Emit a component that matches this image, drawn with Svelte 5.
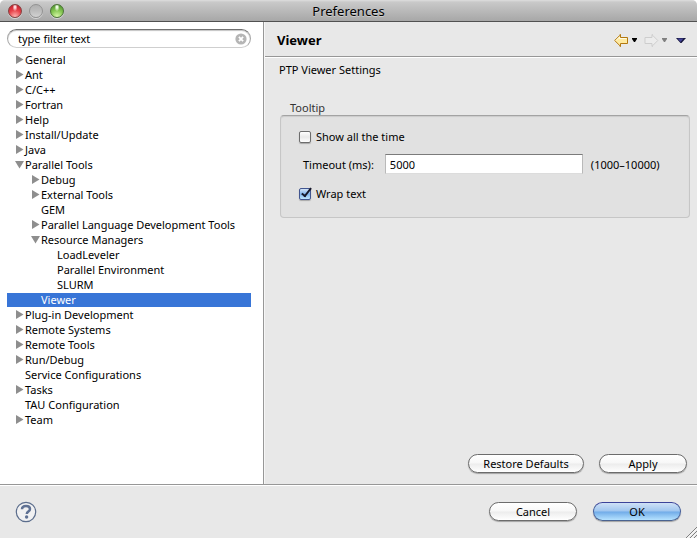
<script>
  let filter = $state('type filter text');
  let selected = $state('Viewer');
  let showAlways = $state(false);
  let wrapText = $state(true);
  let timeout = $state('5000');

  let nodes = $state([
    { name: 'General', level: 0, open: false },
    { name: 'Ant', level: 0, open: false },
    { name: 'C/C++', level: 0, open: false },
    { name: 'Fortran', level: 0, open: false },
    { name: 'Help', level: 0, open: false },
    { name: 'Install/Update', level: 0, open: false },
    { name: 'Java', level: 0, open: false },
    { name: 'Parallel Tools', level: 0, open: true },
    { name: 'Debug', level: 1, open: false },
    { name: 'External Tools', level: 1, open: false },
    { name: 'GEM', level: 1 },
    { name: 'Parallel Language Development Tools', level: 1, open: false },
    { name: 'Resource Managers', level: 1, open: true },
    { name: 'LoadLeveler', level: 2 },
    { name: 'Parallel Environment', level: 2 },
    { name: 'SLURM', level: 2 },
    { name: 'Viewer', level: 1 },
    { name: 'Plug-in Development', level: 0, open: false },
    { name: 'Remote Systems', level: 0, open: false },
    { name: 'Remote Tools', level: 0, open: false },
    { name: 'Run/Debug', level: 0, open: false },
    { name: 'Service Configurations', level: 0 },
    { name: 'Tasks', level: 0, open: false },
    { name: 'TAU Configuration', level: 0 },
    { name: 'Team', level: 0, open: false }
  ]);

  // A row is hidden while any of its ancestors is closed.
  let rows = $derived.by(() => {
    const out = [];
    let closedAt = Infinity;
    for (const node of nodes) {
      if (node.level > closedAt) continue;
      closedAt = node.open === false ? node.level : Infinity;
      out.push(node);
    }
    return out;
  });

  function choose(node) {
    selected = node.name;
    if (node.open !== undefined) node.open = !node.open;
  }
</script>

<div class="window">
  <header class="titlebar">
    <div class="lights">
      <button class="light red" aria-label="Close"></button>
      <button class="light grey" aria-label="Minimise" disabled></button>
      <button class="light green" aria-label="Zoom"></button>
    </div>
    <h1>Preferences</h1>
  </header>

  <div class="panes">
    <nav class="side" aria-label="Preference pages">
      <div class="search">
        <input type="text" aria-label="Filter" bind:value={filter} />
        <button class="clear" aria-label="Clear filter" onclick={() => (filter = '')}>
          <svg width="12" height="12" viewBox="0 0 12 12">
            <circle cx="6" cy="6" r="5.6" fill="#b5b5b5" />
            <path d="M3.9 3.9l4.2 4.2M8.1 3.9L3.9 8.1" stroke="#fff" stroke-width="1.8" />
          </svg>
        </button>
      </div>
      <ul class="tree">
        {#each rows as node (node.name)}
          <li>
            <button
              class={['row', 'level' + node.level, node.name === selected && 'selected']}
              aria-expanded={node.open}
              onclick={() => choose(node)}
            >
              <svg class="twist" width="9" height="9" viewBox="0 0 9 9" aria-hidden="true">
                {#if node.open === true}
                  <path d="M0 1h9L4.5 8.5z" fill="#8e8e8e" />
                {:else if node.open === false}
                  <path d="M1 0v9l7.5-4.5z" fill="#8e8e8e" />
                {/if}
              </svg>
              <span>{node.name}</span>
            </button>
          </li>
        {/each}
      </ul>
    </nav>

    <main class="page">
      <div class="pagehead">
        <h2>Viewer</h2>
        <div class="tools">
          <button class="tool" aria-label="Back">
            <svg width="15" height="13" viewBox="0 0 15 13">
              <path d="M.7 6.5L6 1.2V.5h.5v3h7v6h-7v3H6v-.7z" fill="#ffeaa0" stroke="#b3780f" />
              <path d="M2 6.5L5.5 3v1.500h7" fill="none" stroke="#fffbe4" />
            </svg>
          </button>
          <button class="tool drop" aria-label="Back history">
            <svg width="5" height="4" viewBox="0 0 5 4"><path d="M0 0h5v1L3 4H2L0 1z" fill="#000" /></svg>
          </button>
          <button class="tool forward" aria-label="Forward" disabled>
            <svg width="15" height="13" viewBox="0 0 15 13">
              <path d="M13.800 6.500L8.500 1.200V.5H8v3H1v6h7v3h.5v-.7z" fill="#ececec" stroke="#cdcdcd" />
            </svg>
          </button>
          <button class="tool drop" aria-label="Forward history" disabled>
            <svg width="5" height="4" viewBox="0 0 5 4"><path d="M0 0h5v1L3 4H2L0 1z" fill="#808080" /></svg>
          </button>
          <button class="tool menu" aria-label="Menu">
            <svg width="10" height="5" viewBox="0 0 10 5">
              <path d="M0 0h10L5.500 5h-1z" fill="#15153c" />
              <path d="M1.500.5h6L4.500 4z" fill="#45459a" />
            </svg>
          </button>
        </div>
      </div>

      <div class="content">
        <p>PTP Viewer Settings</p>
        <fieldset>
          <legend>Tooltip</legend>
          <div class="group">
            <label class="check"><input type="checkbox" bind:checked={showAlways} />Show all the time</label>
            <div class="field">
              <label for="timeout">Timeout (ms):</label>
              <input id="timeout" type="text" bind:value={timeout} />
              <span>(1000–10000)</span>
            </div>
            <label class="check"><input type="checkbox" bind:checked={wrapText} />Wrap text</label>
          </div>
        </fieldset>
        <div class="actions">
          <button class="push wide">Restore Defaults</button>
          <button class="push">Apply</button>
        </div>
      </div>
    </main>
  </div>

  <footer>
    <button class="help" aria-label="Help">
      <svg width="22" height="22" viewBox="0 0 22 22">
        <circle cx="11" cy="11" r="9.7" fill="#f1f1f2" stroke="#5b6d8c" stroke-width="1.2" />
        <path d="M7 8.200C7 5.900 8.600 4.900 11 4.900s4 1.100 4 3.100c0 2.700-3.200 2.500-3.200 5" fill="none" stroke="#5f7193" stroke-width="2.500" />
        <circle cx="11.6" cy="16" r="1.7" fill="#5f7193" />
      </svg>
    </button>
    <div class="confirm">
      <button class="push">Cancel</button>
      <button class="push default">OK</button>
    </div>
    <svg class="grip" width="12" height="12" viewBox="0 0 12 12" aria-hidden="true">
      <path d="M1 12L12 1M5 12l7-7M9 12l3-3" stroke="#808080" />
      <path d="M2.500 12L12 2.500M6.500 12L12 6.500M10.500 12l1.500-1.500" stroke="#fff" />
    </svg>
  </footer>
</div>

<style>
  :global(body) {
    margin: 0;
    background: #fff;
  }
  .window {
    display: flex;
    flex-direction: column;
    min-height: 100vh;
    background: #e8e8e8;
    color: #000;
    font: 11px/15px 'Lucida Grande', 'Noto Sans', 'Open Sans', sans-serif;
    border-radius: 5px 5px 0 0;
    overflow: hidden;
    position: relative;
  }
  button,
  input {
    font: inherit;
    color: inherit;
    margin: 0;
    padding: 0;
    border: 0;
    background: none;
    box-sizing: border-box;
  }
  h1,
  h2,
  p,
  ul {
    margin: 0;
    padding: 0;
  }
  svg {
    display: block;
  }

  .titlebar {
    display: grid;
    grid-template-columns: 1fr auto 1fr;
    align-items: center;
    height: 22px;
    box-sizing: border-box;
    border-bottom: 1px solid #515151;
    background: linear-gradient(#dedede, #c9c9c9 10%, #a7a7a7);
  }
  h1 {
    font-size: 13px;
    line-height: 20px;
    font-weight: 400;
    padding-top: 1px;
    text-shadow: 0 1px 0 rgba(255, 255, 255, 0.4);
  }
  .lights {
    display: flex;
    gap: 7px;
    padding-left: 8px;
  }
  .light {
    width: 14px;
    height: 14px;
    border-radius: 50%;
    box-shadow: 0 1px 0 rgba(255, 255, 255, 0.5);
  }
  .red {
    border: 1px solid #84403f;
    background: radial-gradient(ellipse at 50% 18%, #ffd9dc 0 8%, transparent 30%),
      radial-gradient(circle at 50% 95%, #ffb3b0, #e8434a 50%, #b91524);
  }
  .grey {
    border: 1px solid #929292;
    background: linear-gradient(#b0b0b0, #bdbdbd 50%, #d2d2d2);
  }
  .green {
    border: 1px solid #4c7338;
    background: radial-gradient(ellipse at 50% 18%, #effbe4 0 8%, transparent 30%),
      radial-gradient(circle at 50% 95%, #d8f9a8, #84c651 50%, #43852a);
  }

  .panes {
    display: flex;
    flex: 1;
  }
  .side {
    flex: 0 0 264px;
    box-sizing: border-box;
    padding: 7px 12px 0 7px;
    background: #fff;
    border-right: 1px solid #979797;
  }
  .search {
    display: flex;
    align-items: center;
    height: 19px;
    box-sizing: border-box;
    padding: 0 3px 0 10px;
    border: 1px solid #a5a5a5;
    border-top-color: #6f6f6f;
    border-bottom-color: #cfcfcf;
    border-radius: 10px;
    box-shadow: inset 0 1px 1px #c4c4c4;
  }
  .search input {
    flex: 1;
    min-width: 0;
    outline: 0;
  }
  .tree {
    list-style: none;
    padding-top: 5px;
  }
  .row {
    display: flex;
    align-items: center;
    width: 100%;
    height: 14px;
    margin-bottom: 1px;
    padding-bottom: 2px;
    white-space: nowrap;
    text-align: left;
  }
  .level0 {
    padding-left: 8px;
  }
  .level1 {
    padding-left: 24px;
  }
  .level2 {
    padding-left: 40px;
  }
  .twist {
    margin-right: 1px;
  }
  .selected {
    background: #3875d7;
    color: #fff;
  }

  .page {
    display: flex;
    flex-direction: column;
    flex: 1;
    min-width: 0;
    border-left: 1px solid #f6f6f6;
  }
  .pagehead {
    display: flex;
    align-items: center;
    justify-content: space-between;
    height: 32px;
    padding: 2px 11px 0 12px;
    border-bottom: 1px solid #979797;
    box-shadow: 0 1px 0 #fff;
  }
  h2 {
    font-size: 13px;
    line-height: 18px;
    font-weight: 700;
  }
  .tools {
    display: flex;
    align-items: center;
  }
  .drop {
    margin-left: 3px;
  }
  .forward {
    margin-left: 7px;
  }
  .menu {
    margin-left: 9px;
  }

  .content {
    display: flex;
    flex-direction: column;
    flex: 1;
    padding: 5px 7px 11px 14px;
  }
  fieldset {
    margin: 23px 0 0;
    padding: 0;
    border: 0;
    min-width: 0;
  }
  legend {
    padding: 0 11px;
    color: #333;
  }
  .group {
    display: flex;
    flex-direction: column;
    gap: 8px;
    margin-left: 1px;
    padding: 13px 18px 16px;
    border: 1px solid #c6c6c6;
    border-top-color: #a3a3a3;
    border-radius: 4px;
    background: #e1e1e1;
    box-shadow: inset 0 1px 1px #cbcbcb;
  }
  .check {
    display: flex;
    align-items: center;
    gap: 5px;
  }
  .check input {
    appearance: none;
    position: relative;
    width: 12px;
    height: 12px;
    border: 1px solid #6d6d6d;
    border-radius: 2px;
    background: linear-gradient(#fff, #e9e9e9 50%, #fff);
    box-shadow: 0 1px 1px rgba(0, 0, 0, 0.25);
  }
  .check input:checked {
    border-color: #41558f;
    background: linear-gradient(#d5e5f8, #7fb2ec 50%, #bfe6ff);
  }
  .check input:checked::after {
    content: '';
    position: absolute;
    left: 4px;
    top: -3px;
    width: 3px;
    height: 9px;
    border: solid #16182c;
    border-width: 0 2px 2px 0;
    transform: rotate(38deg);
  }
  .field {
    display: flex;
    align-items: center;
    gap: 8px;
    padding: 2px 4px 4px;
  }
  .field label {
    padding-right: 3px;
  }
  .field input {
    flex: 0 1 198px;
    min-width: 0;
    height: 20px;
    padding: 0 4px;
    border: 1px solid #b9b9b9;
    border-top-color: #7b7b7b;
    border-bottom-color: #dcdcdc;
    background: #fff;
    outline: 0;
  }
  .actions {
    display: flex;
    justify-content: flex-end;
    gap: 15px;
    margin-top: auto;
    padding: 12px 3px 0;
  }
  .push {
    width: 88px;
    height: 19px;
    border: 1px solid #6c6c6c;
    border-radius: 10px;
    background: linear-gradient(#fff, #f7f7f7 48%, #ececec 52%, #fff);
    box-shadow: 0 1px 1px rgba(0, 0, 0, 0.3);
    line-height: 17px;
  }
  .wide {
    width: 116px;
  }
  .default {
    border-color: #3c4399 #47609c #4a6390;
    background: linear-gradient(#cfe1f6, #9fc5ef 48%, #70abe8 52%, #b5e2ff);
  }

  footer {
    display: flex;
    align-items: center;
    justify-content: space-between;
    height: 53px;
    padding: 0 16px 0 15px;
    border-top: 1px solid #979797;
    box-shadow: inset 0 1px 0 #fff;
  }
  .confirm {
    display: flex;
    gap: 16px;
  }
  .grip {
    position: absolute;
    right: 0;
    bottom: 0;
  }
</style>
